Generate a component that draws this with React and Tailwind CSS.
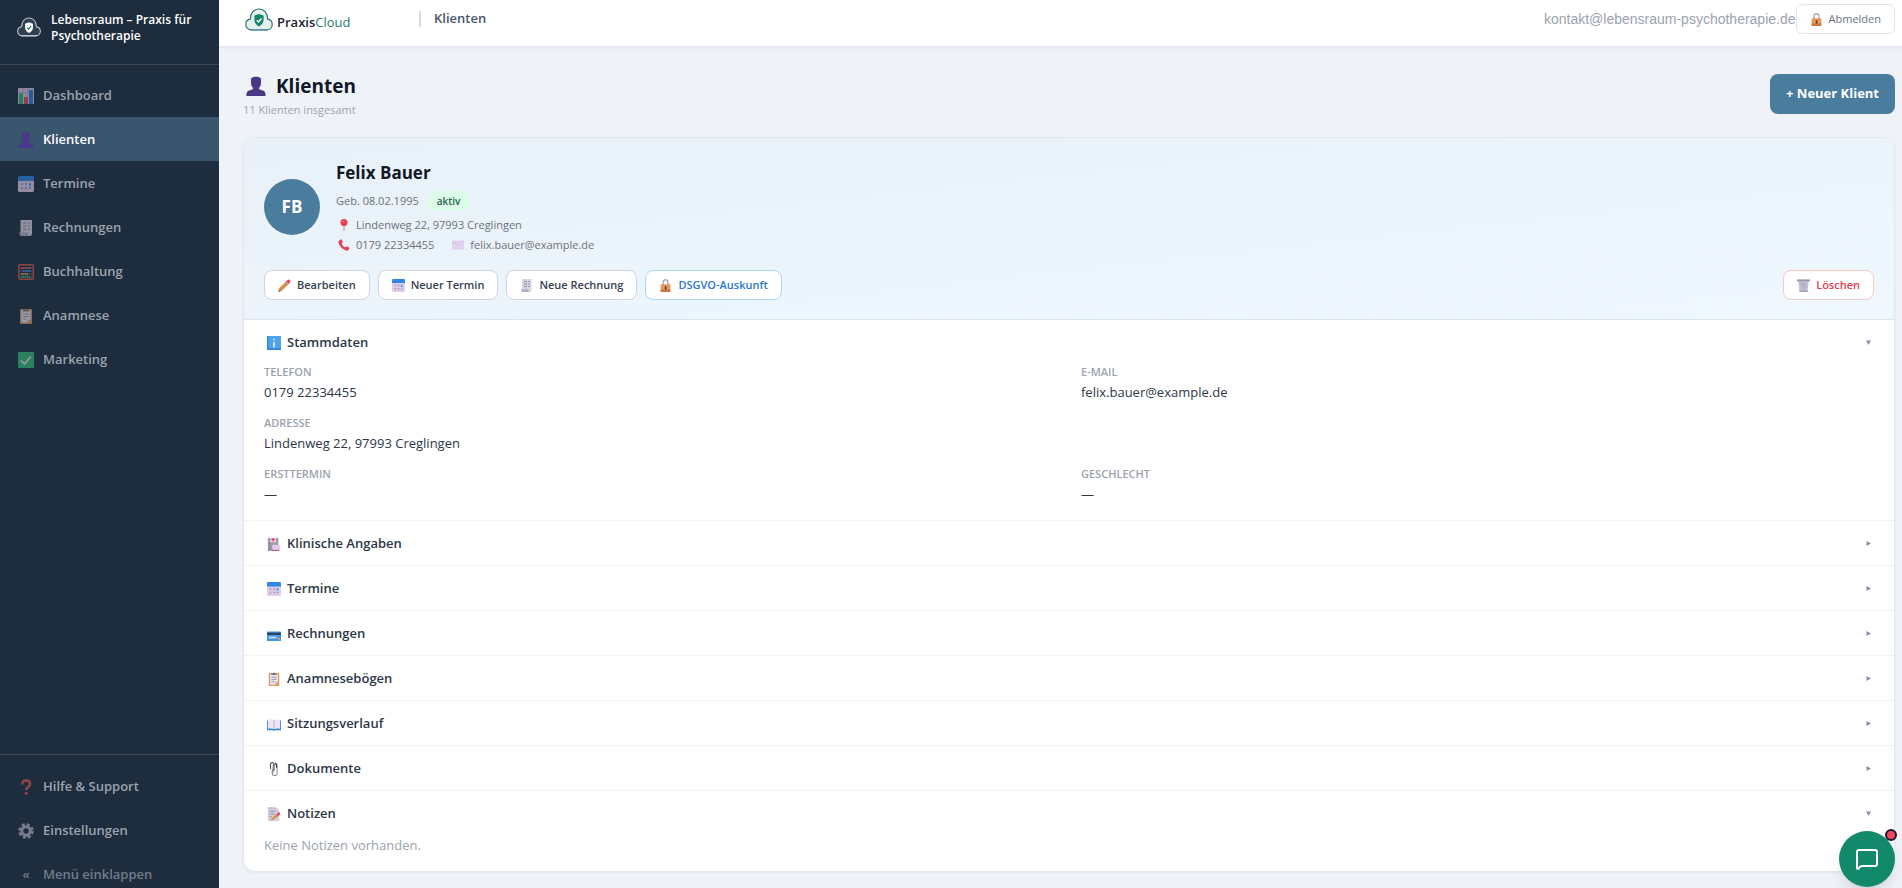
import { useState } from 'react'
import { MessageSquare } from 'lucide-react'

// Small colour pictograms, all drawn on a 16x16 grid.
const ICONS = {
  chart: (
    <>
      <rect x="0" y="0" width="16" height="16" rx="1" fill="#d9c9de" />
      <rect x="1" y="5" width="4" height="11" fill="#34b56f" />
      <rect x="6" y="9" width="4" height="7" fill="#e0445a" />
      <rect x="11" y="2" width="4" height="14" fill="#2b7de0" />
      <path d="M5 0v5M10 0v9M0 5h10" stroke="#b3a3bd" strokeWidth="1" />
    </>
  ),
  person: (
    <>
      <path d="M4 2C5 0 11 0 12 2v4C12 8 10 10.500 8 10.500S4 8 4 6z" fill="#4a3888" />
      <path d="M5.500 8h5v2.500l3.500 1.300c1.200.5 1.700 1.700 1.700 4.200H.3c0-2.500.5-3.700 1.700-4.200l3.500-1.300z" fill="#4a3888" />
    </>
  ),
  calendar: (
    <>
      <rect x="0" y="1" width="16" height="15" rx="1.500" fill="#dfcdea" />
      <path d="M0 5V1.500Q0 0 1.500 0h13Q16 0 16 1.500V5z" fill="#2f86e8" />
      <path d="M3 7h2v2H3zM7 7h2v2H7zM3 11h2v2H3zM7 11h2v2H7zM11 11h2v2h-2z" fill="#a9a0bd" />
      <path d="M11 7h2v3h-2z" fill="#3f9df2" />
    </>
  ),
  receipt: (
    <>
      <path d="M2.500 0H14v13.500q0 2.500-2.500 2.500H4q-1.500 0-1.500-1.500z" fill="#dad3e2" />
      <path d="M1.500 12.500H10v1.500q0 2 1.500 2H3.500q-2 0-2-2z" fill="#b5adc2" />
      <path d="M5 3h3.500M10 3h2M5 6h3.500M10 6h2M5 9h3.500M10 9h2" stroke="#8d8699" strokeWidth="1.200" />
    </>
  ),
  abacus: (
    <>
      <rect x=".75" y=".75" width="14.500" height="14.500" rx="2" fill="none" stroke="#d8574b" strokeWidth="1.500" />
      <path d="M2 4h12M2 7h12M2 10h12M2 13h12" stroke="#a39fb0" strokeWidth=".6" />
      <path d="M3 4h10" stroke="#e2504c" strokeWidth="2" strokeDasharray="1.500 .5" />
      <path d="M5 7h8" stroke="#2e86e6" strokeWidth="2" strokeDasharray="1.500 .5" />
      <path d="M3 10h7" stroke="#e69a4d" strokeWidth="2" strokeDasharray="1.500 .5" />
      <path d="M3 12.800h10" stroke="#33ad6e" strokeWidth="2" strokeDasharray="1.500 .5" />
    </>
  ),
  clipboard: (
    <>
      <rect x="2" y="1" width="12" height="15" rx="1" fill="#dd9960" />
      <path d="M3.500 2.500h9v9l-3 3h-6z" fill="#eae4f1" />
      <path d="M12.500 11.500l-3 3v-3z" fill="#b9aec8" />
      <path d="M5 3.500V2h1.500Q8-1 9.500 2H11v1.500z" fill="#77717f" />
      <path d="M5 6h6M5 8.500h6M5 11h3.500" stroke="#958ea5" strokeWidth="1" />
    </>
  ),
  check: (
    <>
      <rect width="16" height="16" rx="1" fill="#35b878" />
      <path d="M3 8.500l3.500 3.500L13 4.500" fill="none" stroke="#f0e8f6" strokeWidth="1.500" />
    </>
  ),
  question: (
    <>
      <path d="M4.500 5.500Q4 1.500 8 1.500t4 3.500c0 3-3.800 2.700-3.800 6" fill="none" stroke="#e0524c" strokeWidth="2.600" />
      <circle cx="8.200" cy="14.200" r="1.600" fill="#e0524c" />
    </>
  ),
  gear: (
    <>
      <circle cx="8" cy="8" r="6.200" fill="none" stroke="#b4b0bf" strokeWidth="3.200" strokeDasharray="2.900 1.970" />
      <circle cx="8" cy="8" r="4.200" fill="none" stroke="#b4b0bf" strokeWidth="3" />
    </>
  ),
  pin: (
    <>
      <path d="M7.200 8h1.600v8H7.200z" fill="#aeaab8" />
      <circle cx="8" cy="4.800" r="4.700" fill="#e9404f" />
      <circle cx="6.700" cy="3.400" r="1.100" fill="#ff8a94" />
    </>
  ),
  phone: (
    <path d="M1 2.500L3.500.5q1-.5 1.500.5l1.200 2.700q.3.900-.5 1.500l-1 .8q1.500 3.500 5 5.200l.9-1q.7-.7 1.500-.3l2.700 1.400q.9.600.3 1.500L13.500 15q-1 .9-2.700.4Q3 12.500.700 5 .2 3.300 1 2.500z" fill="#e04352" />
  ),
  mail: (
    <>
      <rect x="0" y="2" width="16" height="12" fill="#e3d2ee" />
      <path d="M0 2.500l8 6 8-6" fill="none" stroke="#d2bfe2" strokeWidth="1" />
    </>
  ),
  pencil: (
    <>
      <path d="M1 12L10 3l3 3-9 9-3.500.8z" fill="#d88a4b" />
      <path d="M9 4l3-3q1-.8 2 0l1 1q.9 1 0 2l-3 3z" fill="#ee4556" />
      <path d="M9 4l1.200-1.200 3 3L12 7z" fill="#b9a7b5" />
      <path d="M.5 15.800l.4-2 1.600 1.500z" fill="#5a4038" />
    </>
  ),
  lock: (
    <>
      <path d="M5 8V4.500q0-3.500 3-3.500t3 3.500V8" fill="none" stroke="#b0a9ba" strokeWidth="1.800" />
      <rect x="2" y="6.500" width="12" height="9.500" rx="1" fill="#e3995a" />
      <path d="M2 13h12v2q0 1-1 1H3q-1 0-1-1z" fill="#c9793f" />
      <path d="M7.200 9h1.800v4H7.200z" fill="#4b3540" />
    </>
  ),
  trash: (
    <>
      <path d="M1.500 2h13L13 16H3z" fill="#c5c5d6" />
      <path d="M4 4l7 11M8 4l4 7M12 4L5 14M8 4l-4 6" stroke="#9a9bb1" strokeWidth=".8" />
      <path d="M0 .5h16v2.300H0z" fill="#9394ab" />
      <path d="M3 14h10v2H3z" fill="#a5a6bb" />
    </>
  ),
  info: (
    <>
      <rect width="16" height="16" rx="1" fill="#2f83dd" />
      <rect x="1.500" y="0" width="14.500" height="14" rx="1" fill="#4da3ee" />
      <path d="M7 3h2v1.800H7zM7 6.500h2V13H7z" fill="#e8ddf6" />
    </>
  ),
  hospital: (
    <>
      <path d="M1 1h12v15H1z" fill="#9f9aa8" />
      <rect x="4" y="0" width="6" height="6" fill="#efe2f3" />
      <path d="M7 1v4M5 3h4" stroke="#e0354e" strokeWidth="1.400" />
      <path d="M6 9h9v6H6z" fill="#e2cdee" />
      <path d="M6 15.300h9" stroke="#d8455c" strokeWidth="1.400" strokeDasharray="2 1" />
      <path d="M2.500 7h1M2.500 10h1M2.500 13h1" stroke="#6d6878" strokeWidth="1.200" />
    </>
  ),
  card: (
    <>
      <rect x="0" y="5" width="16" height="11" rx="1" fill="#3e97e6" />
      <path d="M0 6.500h16v2.500H0z" fill="#2b4055" />
      <path d="M2 11h9v2H2z" fill="#dfd5ee" />
      <path d="M12.500 12.500H15v2h-2.500z" fill="#f0a25c" />
    </>
  ),
  book: (
    <>
      <path d="M0 4h16v11H9.500L8 16l-1.500-1H0z" fill="#3583da" />
      <path d="M1 3q4-1 7 .8Q11 2 15 3v10.500q-4-.8-7 .5-3-1.300-7-.5z" fill="#eee6f7" />
      <path d="M8 4v10" stroke="#b9a9ce" strokeWidth="1" />
    </>
  ),
  clips: (
    <>
      <path d="M7 12V5.500q0-2.500 2.300-2.500t2.200 2.500V13q0 2.500-2.700 2.500T6 13V8" fill="none" stroke="#8d8a98" strokeWidth="1.200" />
      <path d="M4 8V3q0-2.300 2-2.300T8 3v7" fill="none" stroke="#4c4a56" strokeWidth="1.200" />
      <path d="M9 1l2 1.500v4" fill="none" stroke="#3f3d49" strokeWidth="1.400" />
    </>
  ),
  memo: (
    <>
      <path d="M1 1h10l3 3v12H1z" fill="#d3cbde" />
      <path d="M1 .8h10" stroke="#a79eb6" strokeWidth="1.600" strokeDasharray="1 1" />
      <path d="M3 5h7M3 8h6M3 11h3" stroke="#9690a6" strokeWidth="1" />
      <path d="M4 14.500l6.500-6 2 2-6.500 4.500z" fill="#e0883f" />
      <path d="M10.500 8.500L13 6.300q1-.6 1.700.2t.2 1.700L12.500 10.500z" fill="#ee4556" />
    </>
  ),
}

function Icon({ name, className = 'size-4' }) {
  return (
    <svg viewBox="0 0 16 16" className={`shrink-0 ${className}`} aria-hidden="true">
      {ICONS[name]}
    </svg>
  )
}

// Cloud with a shield and tick. Colours differ between sidebar and top bar.
function CloudLogo({ className, stroke, base, fill, shield, tick }) {
  return (
    <svg viewBox="0 0 28 23" className={`shrink-0 ${className}`} aria-hidden="true">
      <path
        d="M6 21.800C2.800 21.800.8 19.300.8 16.500c0-2.800 1.900-5 4.600-5.300C5.200 5.500 8.800 1 14 1s8.800 4.500 8.600 10.200c2.700.3 4.600 2.500 4.600 5.300 0 2.800-2 5.300-5.200 5.300z"
        fill={fill}
        stroke={stroke}
        strokeWidth="1.200"
      />
      <path d="M5.500 21.900h17" stroke={base} strokeWidth="1.400" strokeLinecap="round" />
      <path d="M14 6l4.600 1.600v4.200c0 3.200-1.900 5.500-4.600 6.700-2.700-1.200-4.600-3.500-4.600-6.700V7.600z" fill={shield} />
      <path d="M11.800 12.200l1.700 1.700 3-3.500" fill="none" stroke={tick} strokeWidth="1.500" />
    </svg>
  )
}

const NAV = [
  { icon: 'chart', label: 'Dashboard' },
  { icon: 'person', label: 'Klienten', active: true },
  { icon: 'calendar', label: 'Termine' },
  { icon: 'receipt', label: 'Rechnungen' },
  { icon: 'abacus', label: 'Buchhaltung' },
  { icon: 'clipboard', label: 'Anamnese' },
  { icon: 'check', label: 'Marketing' },
]

function NavItem({ icon, label, active }) {
  return (
    <a
      href="#"
      aria-current={active ? 'page' : undefined}
      className={`flex h-11 shrink-0 items-center gap-[9px] pt-px pl-[18px] text-[13px] font-semibold ${
        active ? 'bg-[#3a556e] text-white' : 'text-[#9aa3af]'
      }`}
    >
      <Icon name={icon} className={active ? 'size-4' : 'size-4 opacity-60'} />
      {label}
    </a>
  )
}

function Sidebar() {
  return (
    <aside className="flex h-screen w-[219px] shrink-0 flex-col overflow-hidden bg-[#1e2d3d]">
      <div className="flex h-[65px] shrink-0 items-start gap-2.5 border-b border-[#3a4655] pt-3 pl-[17px]">
        <CloudLogo className="mt-[5px] h-5 w-6" stroke="#c3cad3" base="#c3cad3" fill="#323f52" shield="#ffffff" tick="#1f7a63" />
        <p className="text-xs leading-4 font-semibold text-white">
          Lebensraum – Praxis für
          <br />
          Psychotherapie
        </p>
      </div>
      <nav className="flex flex-1 flex-col pt-2">
        {NAV.map((item) => (
          <NavItem key={item.label} {...item} />
        ))}
      </nav>
      <div className="flex h-[134px] shrink-0 flex-col border-t border-[#3a4655] pt-[9px]">
        <NavItem icon="question" label="Hilfe & Support" />
        <NavItem icon="gear" label="Einstellungen" />
        <button type="button" className="flex h-11 shrink-0 items-center gap-[9px] pt-px pl-[18px] text-[13px] font-semibold text-[#717b89]">
          <span className="w-4 text-center">«</span>
          Menü einklappen
        </button>
      </div>
    </aside>
  )
}

function TopBar() {
  return (
    <header className="flex items-center border-b border-[#e2e8f0] bg-white pt-1 pr-[7px] pb-3 pl-[26px] shadow-[0_1px_3px_rgba(0,0,0,0.05)]">
      <a href="#" className="flex w-[174px] items-center gap-1">
        <CloudLogo className="h-[23px] w-7" stroke="#2c7a72" base="#5b8fae" fill="#e6f0ef" shield="#12876b" tick="#ffffff" />
        <span className="pt-1.5 text-[13px] leading-4 text-[#2c7a6b]">
          <b className="font-semibold text-[#1a2332]">Praxis</b>Cloud
        </span>
      </a>
      <span className="h-4 w-0.5 bg-[#d5dae1]" />
      <span className="ml-[13px] text-[13px] font-semibold text-[#4a5568]">Klienten</span>
      <span className="ml-auto font-['Liberation_Sans',Arial,sans-serif] text-sm text-[#9ca3af]">
        kontakt@lebensraum-psychotherapie.de
      </span>
      <button type="button" className="flex h-[30px] items-center gap-1.5 rounded-md border border-[#e2e5ea] bg-white px-[13px] text-[11px] text-[#6b7280]">
        <Icon name="lock" className="size-3.25" />
        Abmelden
      </button>
    </header>
  )
}

function ActionButton({ icon, label, className = 'border-[#d1d5db] text-[#374151]' }) {
  return (
    <button type="button" className={`flex h-[30px] items-center gap-1.5 rounded-lg border bg-white px-[13px] text-[11px] font-semibold ${className}`}>
      <Icon name={icon} className="size-3.25" />
      {label}
    </button>
  )
}

function ClientHeader() {
  return (
    <div className="border-b border-[#dde5ee] bg-linear-to-br from-[#e8f0f8] to-[#f0f8ff] px-5 pt-5 pb-[19px]">
      <div className="flex items-center gap-4">
        <div className="flex size-14 shrink-0 items-center justify-center rounded-full bg-[#4a7c9e] text-[17px] font-bold text-white">
          FB
        </div>
        <div className="text-[11px] text-[#6b7280]">
          <h2 className="text-[17px] leading-[29px] font-bold text-[#111827]">Felix Bauer</h2>
          <div className="mt-1 flex h-5 items-center gap-2">
            <span>Geb. 08.02.1995</span>
            <span className="rounded-full bg-[#dcfce7] px-2.5 py-0.5 text-[10px] leading-4 font-semibold text-[#276749]">aktiv</span>
          </div>
          <p className="mt-1 flex h-5 items-center gap-1.5">
            <Icon name="pin" className="ml-0.5 size-3" />
            Lindenweg 22, 97993 Creglingen
          </p>
          <p className="flex h-5 items-center gap-1.5">
            <Icon name="phone" className="ml-0.5 size-3" />
            0179 22334455
            <Icon name="mail" className="ml-3 size-3" />
            felix.bauer@example.de
          </p>
        </div>
      </div>
      <div className="mt-[15px] flex gap-2">
        <ActionButton icon="pencil" label="Bearbeiten" />
        <ActionButton icon="calendar" label="Neuer Termin" />
        <ActionButton icon="receipt" label="Neue Rechnung" />
        <ActionButton icon="lock" label="DSGVO-Auskunft" className="border-[#a9d8f7] text-[#2b77cb]" />
        <ActionButton icon="trash" label="Löschen" className="ml-auto border-[#fcc9c2] text-[#e53e4e]" />
      </div>
    </div>
  )
}

function Section({ icon, title, defaultOpen = false, children }) {
  const [open, setOpen] = useState(defaultOpen)
  return (
    <section className="border-b border-[#f1f3f5] last:border-b-0">
      <button
        type="button"
        aria-expanded={open}
        onClick={() => setOpen(!open)}
        className="flex h-11 w-full items-center gap-1.5 px-[23px] pt-px text-[13px] font-semibold text-[#2d3748]"
      >
        <Icon name={icon} className="size-3.5" />
        {title}
        <svg viewBox="0 0 5 5" className="ml-auto size-[5px]" fill="#8494a8" aria-hidden="true">
          {open ? <path d="M0 .5h5L2.500 5z" /> : <path d="M.5 0v5L5 2.500z" />}
        </svg>
      </button>
      {open && children}
    </section>
  )
}

function Field({ label, value, wide }) {
  return (
    <div className={wide ? 'col-span-2' : ''}>
      <dt className="text-[11px] leading-4 font-semibold text-[#9ca3af] uppercase">{label}</dt>
      <dd className="pt-0.5 text-[13px] leading-[21px] text-[#2d3748]">{value}</dd>
    </div>
  )
}

export default function App() {
  return (
    <div className="flex h-screen overflow-hidden bg-[#eff3f8] font-['Open_Sans','Noto_Sans',sans-serif]">
      <Sidebar />
      <div className="flex min-w-0 flex-1 flex-col">
        <TopBar />
        <main className="pt-[27px] pr-[7px] pl-6">
          <div className="mb-[17px] flex items-start justify-between">
            <div>
              <h1 className="flex items-center gap-2.5 pl-[3px] text-[19px] leading-6 font-bold text-[#111827]">
                <Icon name="person" className="size-5" />
                Klienten
              </h1>
              <p className="pt-0.5 text-[11px] leading-5 text-[#9ca3af]">11 Klienten insgesamt</p>
            </div>
            <button type="button" className="h-10 rounded-lg bg-[#4a7c9e] px-4 text-[13px] font-bold text-white">
              + Neuer Klient
            </button>
          </div>

          <div className="overflow-hidden rounded-xl border border-[#e2e8f0] bg-white shadow-[0_1px_3px_rgba(0,0,0,0.05)]">
            <ClientHeader />
            <Section icon="info" title="Stammdaten" defaultOpen>
              <dl className="grid grid-cols-2 gap-x-6 gap-y-3 px-5 pb-[15px]">
                <Field label="Telefon" value="0179 22334455" />
                <Field label="E-Mail" value="felix.bauer@example.de" />
                <Field label="Adresse" value="Lindenweg 22, 97993 Creglingen" wide />
                <Field label="Ersttermin" value="—" />
                <Field label="Geschlecht" value="—" />
              </dl>
            </Section>
            <Section icon="hospital" title="Klinische Angaben" />
            <Section icon="calendar" title="Termine" />
            <Section icon="card" title="Rechnungen" />
            <Section icon="clipboard" title="Anamnesebögen" />
            <Section icon="book" title="Sitzungsverlauf" />
            <Section icon="clips" title="Dokumente" />
            <Section icon="memo" title="Notizen" defaultOpen>
              <p className="px-5 pb-4 text-[13px] leading-5 text-[#9ca3af]">Keine Notizen vorhanden.</p>
            </Section>
          </div>
        </main>
      </div>

      <button
        type="button"
        aria-label="Chat öffnen"
        className="fixed right-[7px] bottom-px flex size-14 items-center justify-center rounded-full bg-[#12896b] text-white shadow-lg"
      >
        <MessageSquare size={24} strokeWidth={2} strokeLinejoin="miter" />
        <span className="absolute -top-0.5 -right-0.5 size-3 rounded-full border-2 border-[#1a1a2e] bg-[#f0475a]" />
      </button>
    </div>
  )
}
